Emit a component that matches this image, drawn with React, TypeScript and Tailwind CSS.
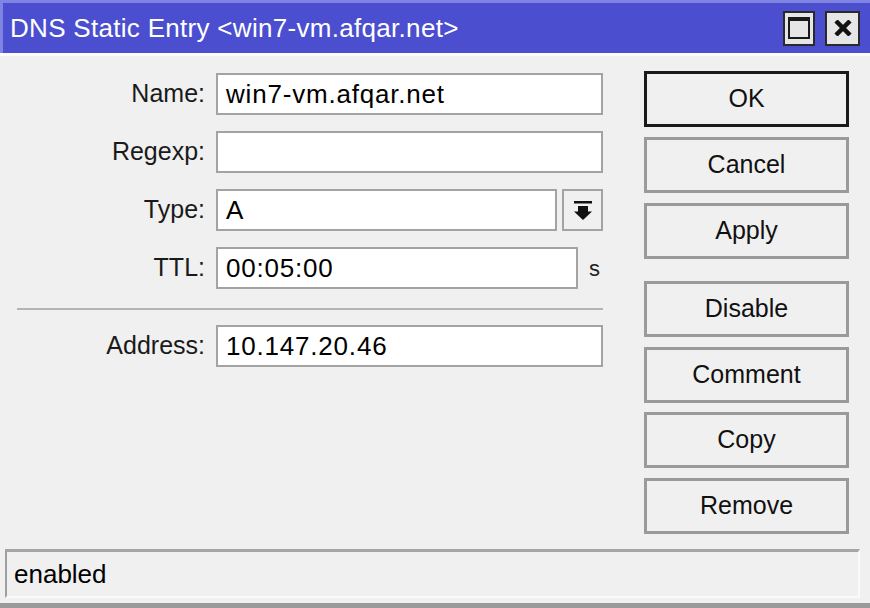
import React from "react";

const font = { fontFamily: '"Liberation Sans", Arial, sans-serif' };

function Label({ children }: { children: React.ReactNode }) {
  return (
    <div className="flex h-[42px] items-center justify-end pr-[11px] text-[25px] text-[#1a1a1a]">
      {children}
    </div>
  );
}

function Field({ value, className = "" }: { value?: string; className?: string }) {
  return (
    <div
      className={`flex h-[42px] items-center border-2 border-[#a3a3a3] bg-white pl-[8px] text-[26px] tracking-[0.8px] text-black ${className}`}
    >
      {value}
    </div>
  );
}

function Btn({ children, primary = false, className = "" }: { children: React.ReactNode; primary?: boolean; className?: string }) {
  return (
    <div
      className={`flex h-[56px] w-[205px] items-center justify-center bg-[#f0f0f0] text-[25px] text-[#111] ${
        primary ? "border-[3px] border-[#1a1a1a]" : "border-[3px] border-[#9a9a9a]"
      } ${className}`}
    >
      {children}
    </div>
  );
}

export default function App() {
  return (
    <div className="flex h-[608px] w-[870px] flex-col overflow-hidden bg-[#f0f0f0]" style={font}>
      {/* Title bar */}
      <div className="flex h-[53px] shrink-0 items-center border-l-[3px] border-t-[3px] border-[#7f83e2] bg-[#4b4fcf] pl-[7px] pr-[10px]">
        <div className="flex-1 text-[26px] tracking-[0.3px] text-white">DNS Static Entry &lt;win7-vm.afqar.net&gt;</div>
        <div className="flex gap-[10px]">
          <div className="flex h-[35px] w-[32px] items-center justify-center border-2 border-[#2a2a2a] bg-[#e6e6e6]">
            <div className="h-[22px] w-[22px] border-2 border-t-[4px] border-[#1a1a1a]" />
          </div>
          <div className="flex h-[35px] w-[35px] items-center justify-center border-2 border-[#2a2a2a] bg-[#e6e6e6]">
            <svg width="18" height="16" viewBox="0 0 18 16">
              <path d="M2 1 L16 15 M16 1 L2 15" stroke="#111" strokeWidth="4.5" />
            </svg>
          </div>
        </div>
      </div>
      <div className="h-[3px] shrink-0 bg-[#fbfbfb]" />

      {/* Body */}
      <div className="flex flex-1 flex-col">
        <div className="flex">
          {/* Form */}
          <div className="flex w-[603px] flex-col pt-[17px]">
            <div className="grid grid-cols-[216px_387px] gap-y-[16px]">
              <Label>Name:</Label>
              <Field value="win7-vm.afqar.net" />
              <Label>Regexp:</Label>
              <Field />
              <Label>Type:</Label>
              <div className="flex gap-[5px]">
                <Field value="A" className="flex-1" />
                <div className="flex h-[42px] w-[41px] items-center justify-center border-2 border-[#a3a3a3] bg-[#f0f0f0]">
                  <svg width="20" height="21" viewBox="0 0 20 21">
                    <rect x="1" y="1" width="18" height="2.5" fill="#111" />
                    <rect x="5" y="6" width="10" height="6" fill="#111" />
                    <path d="M1 11.5 H19 L10 20 Z" fill="#111" />
                  </svg>
                </div>
              </div>
              <Label>TTL:</Label>
              <div className="flex items-center">
                <Field value="00:05:00" className="w-[362px]" />
                <span className="ml-[11px] text-[22px] text-[#222]">s</span>
              </div>
            </div>
            <div className="ml-[17px] mt-[19px] h-[2px] bg-[#b4b4b4]" />
            <div className="mt-[15px] grid grid-cols-[216px_387px]">
              <Label>Address:</Label>
              <Field value="10.147.20.46" />
            </div>
          </div>

          {/* Buttons */}
          <div className="ml-[41px] flex flex-col pt-[15px]">
            <Btn primary>OK</Btn>
            <Btn className="mt-[10px]">Cancel</Btn>
            <Btn className="mt-[10px]">Apply</Btn>
            <Btn className="mt-[22px]">Disable</Btn>
            <Btn className="mt-[10px]">Comment</Btn>
            <Btn className="mt-[9px]">Copy</Btn>
            <Btn className="mt-[10px]">Remove</Btn>
          </div>
        </div>

        {/* Status bar */}
        <div className="mx-[5px] mt-auto mb-[5px] w-[855px] flex h-[49px] items-center border-l-2 border-t-[3px] border-b-2 border-r-2 border-l-[#9f9f9f] border-t-[#a5a5a5] border-b-[#fafafa] border-r-[#fafafa] pl-[7px] text-[26px] text-black">
          enabled
        </div>
      </div>
      <div className="h-[5px] shrink-0 bg-[#9a9a9a]" />
    </div>
  );
}
